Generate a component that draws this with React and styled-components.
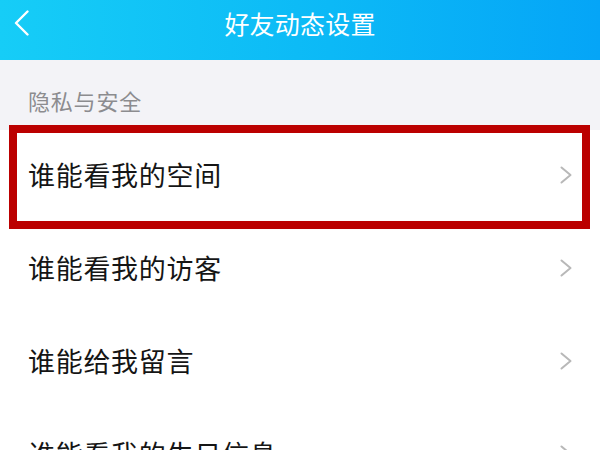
import React from "react";
import styled, { createGlobalStyle } from "styled-components";

const GlobalStyle = createGlobalStyle`
  html, body {
    margin: 0;
    padding: 0;
    background: #ffffff;
    font-family: "Noto Sans CJK SC", "Noto Sans", sans-serif;
  }
`;

const items = [
  { label: "谁能看我的空间", highlight: true },
  { label: "谁能看我的访客" },
  { label: "谁能给我留言" },
  { label: "谁能看我的生日信息" },
];

const BackIcon = () => (
  <svg width="15" height="26" viewBox="0 0 15 26" fill="none">
    <polyline
      points="13.5,1.5 2,13 13.5,24.5"
      stroke="#ffffff"
      strokeWidth="2.4"
      strokeLinecap="round"
      strokeLinejoin="round"
    />
  </svg>
);

const Chevron = () => (
  <svg width="12" height="18" viewBox="0 0 12 18" fill="none">
    <polyline
      points="1.5,1.5 10.5,9 1.5,16.5"
      stroke="#b8b8b8"
      strokeWidth="2"
      strokeLinecap="round"
      strokeLinejoin="round"
    />
  </svg>
);

const App = () => {
  return (
    <Page>
      <GlobalStyle />
      <Header>
        <BackButton>
          <BackIcon />
        </BackButton>
        <Title>好友动态设置</Title>
      </Header>

      <SectionLabel>隐私与安全</SectionLabel>

      <List>
        {items.map((item) => (
          <Row key={item.label} $highlight={item.highlight}>
            <RowText>{item.label}</RowText>
            <Chevron />
          </Row>
        ))}
      </List>
    </Page>
  );
};

export default App;

// Styled-components
const Page = styled.div`
  width: 600px;
  height: 450px;
  overflow: hidden;
  background: #ffffff;
`;

const Header = styled.header`
  position: relative;
  height: 60px;
  display: flex;
  align-items: center;
  justify-content: center;
  padding-bottom: 14px;
  box-sizing: border-box;
  background: linear-gradient(90deg, #16cdf7 0%, #0cb9f6 55%, #05a5f7 100%);
`;

// back arrow sits over the left end of the bar
const BackButton = styled.div`
  position: absolute;
  left: 14px;
  top: 10px;
  display: flex;
`;

const Title = styled.h1`
  margin: 0;
  color: #ffffff;
  font-size: 25px;
  font-weight: 400;
  letter-spacing: 0.2px;
`;

const SectionLabel = styled.div`
  height: 70px;
  display: flex;
  align-items: center;
  padding: 10px 0 0 28px;
  box-sizing: border-box;
  background: #f3f3f7;
  color: #8c8c8f;
  font-size: 22px;
  letter-spacing: 0.8px;
`;

const List = styled.div`
  display: flex;
  flex-direction: column;
  background: #ffffff;
`;

const Row = styled.div`
  position: relative;
  height: 93px;
  flex-shrink: 0;
  display: flex;
  align-items: center;
  justify-content: space-between;
  padding: 0 28px 4px 28px;
  box-sizing: border-box;

  ${({ $highlight }) =>
    $highlight &&
    `
    &::after {
      content: "";
      position: absolute;
      top: -5px;
      bottom: -6px;
      left: 9px;
      right: 10px;
      border: 8px solid #bb0000;
      pointer-events: none;
    }
  `}
`;

const RowText = styled.span`
  color: #151515;
  font-size: 27px;
  font-weight: 400;
  letter-spacing: 0.7px;
`;
